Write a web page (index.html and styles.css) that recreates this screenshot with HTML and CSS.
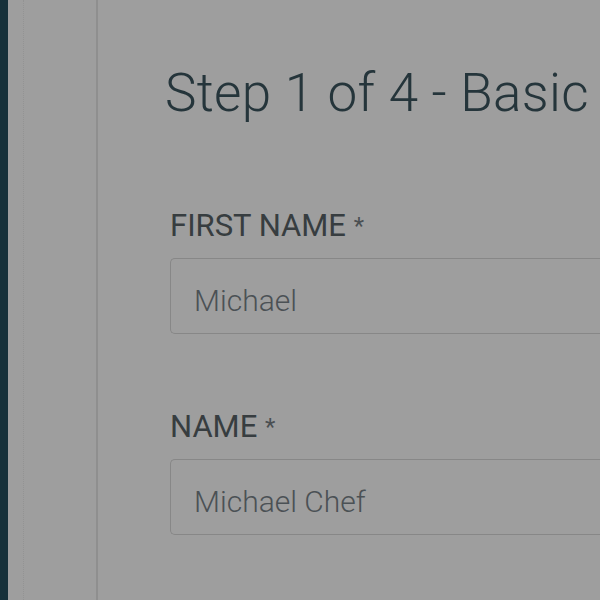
FILE: index.html
```html
<!DOCTYPE html>
<html>
<head>
<meta charset="utf-8">
<link rel="stylesheet" href="styles.css">
</head>
<body>
<div class="app">
  <div class="strip"></div>
  <div class="sidebar"><div class="dots"></div></div>
  <main class="main">
    <h1 class="title">Step 1 of 4 - Basic</h1>
    <div class="field">
      <label class="label">FIRST NAME <span class="req">*</span></label>
      <div class="input">Michael</div>
    </div>
    <div class="field">
      <label class="label">NAME <span class="req">*</span></label>
      <div class="input">Michael Chef</div>
    </div>
  </main>
</div>
</body>
</html>
```
FILE: styles.css
```css
html, body {
  margin: 0;
  padding: 0;
  height: 100%;
  background: #9e9e9e;
  overflow: hidden;
}
.app {
  display: flex;
  height: 600px;
  font-family: Roboto, "Liberation Sans", sans-serif;
}
.strip {
  width: 8px;
  flex: none;
  background: #17313a;
}
.sidebar {
  width: 88px;
  flex: none;
  border-right: 2px solid #8f8f8f;
  position: relative;
}
.dots {
  position: absolute;
  left: 15px;
  top: 0;
  bottom: 0;
  border-left: 1px dotted #939393;
}
.main {
  flex: 1;
  padding-left: 72px;
  white-space: nowrap;
  overflow: hidden;
}
.title {
  margin: 61px 0 0 -5px;
  font-weight: 300;
  font-size: 53px;
  letter-spacing: 0.3px;
  line-height: 64px;
  color: #25353b;
}
.field {
  margin-top: 83px;
}
.field + .field {
  margin-top: 75px;
}
.label {
  display: block;
  font-size: 31px;
  line-height: 36px;
  color: #373d40;
  font-weight: 400;
}
.req {
  font-size: 24px;
  vertical-align: top;
  color: #4a4f52;
}
.input {
  margin-top: 14px;
  height: 74px;
  border: 1px solid #878787;
  border-right: none;
  border-radius: 5px 0 0 5px;
  padding-left: 23px;
  font-size: 30px;
  font-weight: 300;
  line-height: 84px;
  color: #4b5155;
}
```
